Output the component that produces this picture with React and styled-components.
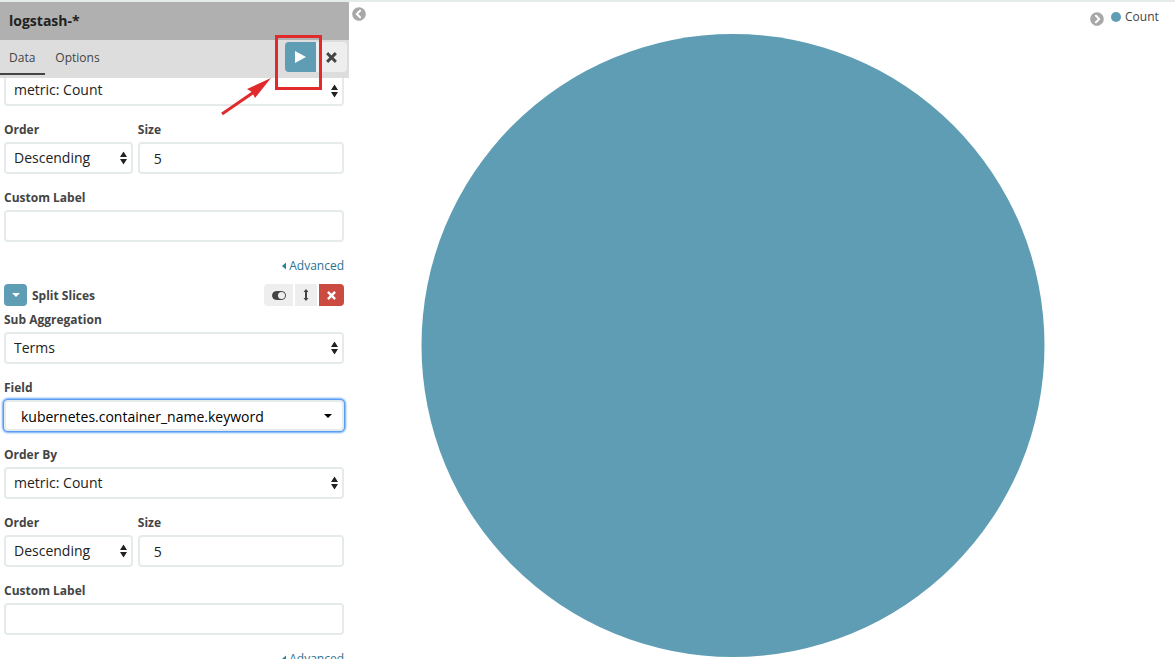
import React, { useId } from "react";
import styled, { createGlobalStyle } from "styled-components";
import { FaChevronCircleLeft, FaChevronCircleRight } from "react-icons/fa";

const GlobalStyle = createGlobalStyle`
  *, *::before, *::after { box-sizing: border-box; }
  body {
    margin: 0;
    background: #fff;
    color: #444;
    font: 12px/18px "Open Sans", "Noto Sans", sans-serif;
  }
  button, input, select { font-family: inherit; }
`;

const Page = styled.div`
  display: flex;
  height: 100vh;
  overflow: hidden;
  border-top: 2px solid #e5ebea;
`;

const Sidebar = styled.aside`
  position: relative;
  flex: none;
  width: 349px;
  display: flex;
  flex-direction: column;
`;

const IndexTitle = styled.h1`
  flex: none;
  margin: 0;
  padding: 0 9px;
  background: #b0b0b0;
  color: #222;
  font-size: 14px;
  line-height: 38px;
  font-weight: 700;
`;

const TabBar = styled.nav`
  flex: none;
  display: flex;
  height: 38px;
  background: #ddd;
`;

const Tab = styled.button`
  height: 35px;
  padding: 2px 10px 0;
  border: 0;
  border-bottom: 2px solid ${(p) => (p.$active ? "#444" : "transparent")};
  background: none;
  color: #444;
  font-size: 12px;

  &:first-child { padding-left: 9px; }
`;

const ApplyGroup = styled.div`
  display: flex;
  margin: 2px 2px 0 auto;
  height: 30px;
  border-radius: 4px;
  overflow: hidden;
`;

const ApplyButton = styled.button`
  display: flex;
  align-items: center;
  justify-content: center;
  width: 31px;
  padding: 0;
  border: 0;
  background: ${(p) => (p.$primary ? "#5f9db4" : "#eee")};
  color: ${(p) => (p.$primary ? "#fff" : "#444")};
`;

const EditorScroll = styled.div`
  flex: 1;
  min-height: 0;
  overflow: hidden;
  padding: 0 5px 0 4px;
`;

const EditorForm = styled.form`
  display: flex;
  flex-direction: column;
  gap: 15px;
  margin-top: ${(p) => (p.$scrolled ? "-3px" : "5px")};
`;

const Group = styled.div`
  display: flex;
  flex-direction: column;
  gap: 3px;
`;

const GroupRow = styled.div`
  display: grid;
  grid-template-columns: 5fr 8fr;
  gap: 5px;
`;

const Label = styled.label`
  font-size: 12px;
  line-height: 18px;
  font-weight: 700;
`;

const Control = styled.div`
  position: relative;
  display: flex;
`;

const Select = styled.select`
  appearance: none;
  width: 100%;
  height: ${(p) => (p.$short ? "31px" : "32px")};
  padding: 0 20px 2px 8px;
  border: 2px solid #e5ebea;
  border-radius: 4px;
  outline: none;
  background: #fff;
  color: #222;
  font-size: 14px;
`;

const ComboSelect = styled(Select)`
  padding: 2px 28px 0 15px;
  color: #000;
  box-shadow: 0 0 0 1px #5b9df5, 0 0 2px 2px #6ba8f8;
`;

const Input = styled.input`
  width: 100%;
  height: 32px;
  padding: 0 14px;
  border: 2px solid #e5ebea;
  border-radius: 4px;
  outline: none;
  background: #fff;
  color: #222;
  font-size: 14px;
`;

const ArrowMark = styled.svg`
  position: absolute;
  top: 50%;
  right: ${(p) => (p.$inset ? "12px" : "6px")};
  transform: translateY(-50%);
  pointer-events: none;
`;

const AdvancedLink = styled.a`
  align-self: flex-end;
  display: flex;
  align-items: center;
  gap: 3px;
  color: #2d7290;
  text-decoration: none;
`;

const AggHeader = styled.div`
  display: flex;
  align-items: center;
  gap: 5px;
  height: 22px;
  margin-top: 9px;
`;

const AggToggle = styled.button`
  display: flex;
  align-items: center;
  justify-content: center;
  width: 23px;
  height: 22px;
  padding: 0;
  border: 0;
  border-radius: 4px;
  background: #5f9db4;
`;

const AggTitle = styled.h2`
  margin: 0;
  padding-top: 2px;
  font-size: 12px;
  line-height: 18px;
`;

const AggActions = styled.div`
  display: flex;
  gap: 2px;
  height: 22px;
  margin-left: auto;
  border-radius: 4px;
  overflow: hidden;
`;

const AggAction = styled.button`
  display: flex;
  align-items: center;
  justify-content: center;
  width: ${(p) => p.$width};
  padding: 0;
  border: 0;
  background: ${(p) => (p.$danger ? "#cc4b40" : "#eee")};
  color: ${(p) => (p.$danger ? "#fff" : "#444")};
`;

const Highlight = styled.div`
  position: absolute;
  top: 33px;
  left: 275px;
  width: 47px;
  height: 55px;
  border: 3px solid #e12a2c;
  pointer-events: none;
`;

const Pointer = styled.svg`
  position: absolute;
  top: 74px;
  left: 220px;
  pointer-events: none;
`;

const PanelToggle = styled.button`
  display: flex;
  align-self: flex-start;
  padding: 0;
  border: 0;
  background: none;
  color: #a8a8a8;
  font-size: 14px;
`;

const CollapseColumn = styled.div`
  flex: none;
  width: 17px;
  padding: 5px 0 0 3px;
`;

const Chart = styled.main`
  flex: 1;
  min-width: 0;
  display: flex;
  padding: 32px 0 2px;
`;

const Pie = styled.svg`
  flex: 1;
  min-width: 0;
  height: 100%;
`;

const Legend = styled.aside`
  flex: none;
  width: 75px;
  display: flex;
  align-items: flex-start;
  gap: 7px;
  padding-top: 6px;
`;

const LegendToggle = styled(PanelToggle)`
  margin: 4px 0 0 -10px;
`;

const LegendItem = styled.div`
  display: flex;
  align-items: center;
  gap: 4px;
`;

const Dot = styled.span`
  width: 10px;
  height: 10px;
  border-radius: 50%;
  background: #5f9db4;
`;

function CrossIcon({ size }) {
  return (
    <svg width={size} height={size} viewBox="0 0 10 10" aria-hidden="true">
      <path d="M2 2L8 8M8 2L2 8" stroke="currentColor" strokeWidth="2.7" strokeLinecap="square" />
    </svg>
  );
}

function SelectField({ label, value, combo, hideLabel }) {
  const id = useId();
  const Field = combo ? ComboSelect : Select;
  return (
    <Group>
      {!hideLabel && <Label htmlFor={id}>{label}</Label>}
      <Control>
        <Field
          id={id}
          $short={combo || hideLabel}
          defaultValue={value}
          aria-label={hideLabel ? label : undefined}
        >
          <option>{value}</option>
        </Field>
        {combo ? (
          <ArrowMark $inset width="8" height="4" viewBox="0 0 8 4" aria-hidden="true">
            <path d="M0 0H8L4 4Z" fill="#000" />
          </ArrowMark>
        ) : (
          <ArrowMark width="7" height="13" viewBox="0 0 7 13" aria-hidden="true">
            <path d="M0 5.5L3.5 0L7 5.5ZM0 7.5H7L3.5 13Z" fill="#222" />
          </ArrowMark>
        )}
      </Control>
    </Group>
  );
}

function TextField({ label, value = "" }) {
  const id = useId();
  return (
    <Group>
      <Label htmlFor={id}>{label}</Label>
      <Input id={id} type="text" defaultValue={value} />
    </Group>
  );
}

function OrderFields({ hideFirstLabel }) {
  return (
    <>
      <SelectField label="Order By" value="metric: Count" hideLabel={hideFirstLabel} />
      <GroupRow>
        <SelectField label="Order" value="Descending" />
        <TextField label="Size" value="5" />
      </GroupRow>
      <TextField label="Custom Label" />
      <AdvancedLink href="#advanced">
        <svg width="4" height="8" viewBox="0 0 4 8" aria-hidden="true">
          <path d="M4 0.5V7.5L0 4Z" fill="#2d7fa0" />
        </svg>
        Advanced
      </AdvancedLink>
    </>
  );
}

export default function App() {
  return (
    <>
      <GlobalStyle />
      <Page>
        <Sidebar>
          <IndexTitle>logstash-*</IndexTitle>
          <TabBar>
            <Tab type="button" $active>Data</Tab>
            <Tab type="button">Options</Tab>
            <ApplyGroup>
              <ApplyButton type="button" $primary aria-label="Apply changes">
                <svg width="11" height="12" viewBox="0 0 11 12" aria-hidden="true">
                  <path d="M0 0L11 6L0 12Z" fill="currentColor" />
                </svg>
              </ApplyButton>
              <ApplyButton type="button" aria-label="Discard changes">
                <CrossIcon size={11} />
              </ApplyButton>
            </ApplyGroup>
          </TabBar>
          <EditorScroll>
            <EditorForm $scrolled>
              <OrderFields hideFirstLabel />
            </EditorForm>
            <AggHeader>
              <AggToggle type="button" aria-label="Collapse Split Slices">
                <svg width="8" height="4" viewBox="0 0 8 4" aria-hidden="true">
                  <path d="M0 0H8L4 4Z" fill="#fff" />
                </svg>
              </AggToggle>
              <AggTitle>Split Slices</AggTitle>
              <AggActions>
                <AggAction type="button" $width="29px" aria-label="Disable aggregation">
                  <svg width="14" height="9" viewBox="0 0 14 9" aria-hidden="true">
                    <rect x="0.5" y="0.5" width="13" height="8" rx="4" fill="#444" stroke="#444" />
                    <circle cx="9.5" cy="4.5" r="3.5" fill="#eee" />
                  </svg>
                </AggAction>
                <AggAction type="button" $width="22px" aria-label="Change priority">
                  <svg width="6" height="12" viewBox="0 0 6 12" aria-hidden="true">
                    <path d="M3 0L5.5 3H4V9H5.5L3 12L0.5 9H2V3H0.5Z" fill="currentColor" />
                  </svg>
                </AggAction>
                <AggAction type="button" $width="25px" $danger aria-label="Remove aggregation">
                  <CrossIcon size={9} />
                </AggAction>
              </AggActions>
            </AggHeader>
            <EditorForm>
              <SelectField label="Sub Aggregation" value="Terms" />
              <SelectField label="Field" value="kubernetes.container_name.keyword" combo />
              <OrderFields />
            </EditorForm>
          </EditorScroll>
          <Highlight />
          <Pointer width="54" height="42" viewBox="0 0 54 42" aria-hidden="true">
            <path d="M2 38L34 16" stroke="#e12a2c" strokeWidth="3" />
            <path d="M51 2L27 13L32 16L35 22Z" fill="#e12a2c" />
          </Pointer>
        </Sidebar>
        <CollapseColumn>
          <PanelToggle type="button" aria-label="Collapse editor">
            <FaChevronCircleLeft />
          </PanelToggle>
        </CollapseColumn>
        <Chart>
          <Pie viewBox="0 0 200 200" role="img" aria-label="Count">
            <circle cx="100" cy="100" r="100" fill="#5f9db4" />
          </Pie>
        </Chart>
        <Legend>
          <LegendToggle type="button" aria-label="Collapse legend">
            <FaChevronCircleRight />
          </LegendToggle>
          <LegendItem>
            <Dot />
            Count
          </LegendItem>
        </Legend>
      </Page>
    </>
  );
}
